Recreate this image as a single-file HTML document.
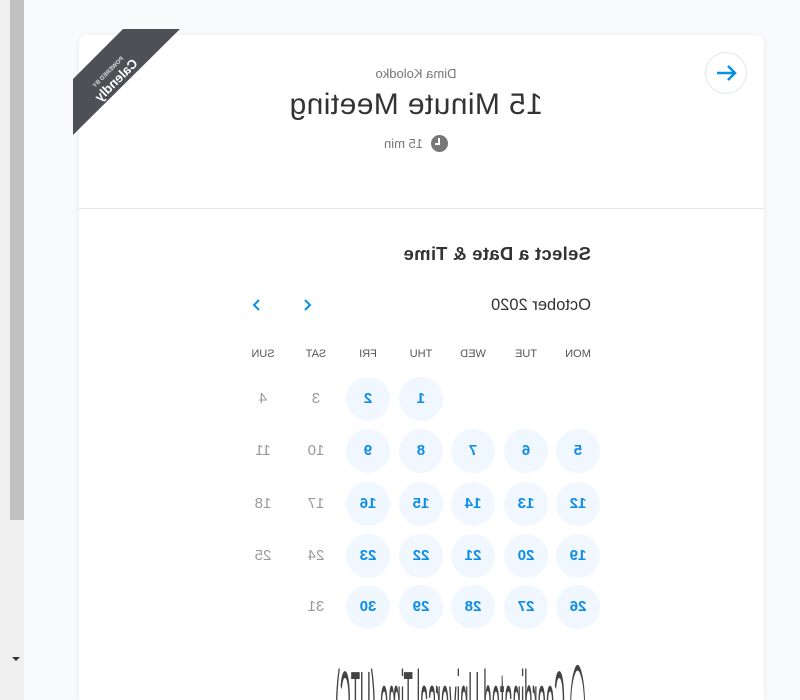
<!DOCTYPE html>
<html><head><meta charset="utf-8"><style>
html,body{margin:0;padding:0;width:800px;height:700px;overflow:hidden;background:#f9fafb;font-family:"Liberation Sans",sans-serif}
#w{position:absolute;left:0;top:0;width:800px;height:700px;overflow:hidden;transform:scaleX(-1);transform-origin:400px 350px}
.sb1{position:absolute;left:776px;top:0;width:24px;height:700px;background:#f0f0f0}
.thumb{position:absolute;left:776px;top:0;width:14px;height:520px;background:#c1c1c1}
.card{position:absolute;left:36px;top:35px;width:685px;height:665px;background:#fff;border-radius:8px 8px 0 0;box-shadow:0 1px 6px rgba(0,0,0,.08);overflow:hidden}
.div{position:absolute;left:0;top:173px;width:685px;height:1px;background:#e6e6e6}
.t{position:absolute;white-space:nowrap;transform:translateX(-50%)}
.back{position:absolute;left:17px;top:17px;width:42px;height:42px;border-radius:50%;border:1px solid #e2e6ea;box-sizing:border-box}
.rib{position:absolute;left:620px;top:29px;width:107px;height:106px;background:#4d5055;clip-path:polygon(0 0,57px 0,107px 50px,107px 106px)}
.rt{position:absolute;left:686px;top:78px;transform:translate(-50%,-50%) rotate(45deg);color:#fff;text-align:center;white-space:nowrap}
.d{position:absolute;width:44px;height:44px;border-radius:50%;margin-left:-22px;margin-top:-22px;text-align:center;line-height:44px;font-size:15px;font-weight:bold;color:#0d8de6;background:#f0f7fe}
.g{background:none;color:#999;font-weight:normal}
.h{position:absolute;font-size:11px;color:#555;transform:translateX(-50%)}
.bt{position:absolute;left:0;top:655px;width:800px;height:45px;overflow:hidden}
</style></head><body><div id="w">
<div class="sb1"></div><div class="thumb"></div>
<div style="position:absolute;left:780px;top:657px;width:0;height:0;border-left:4px solid transparent;border-right:4px solid transparent;border-top:4px solid #333"></div>
<div class="card">
 <div class="back"><svg width="40" height="40" viewBox="0 0 40 40" style="position:absolute;left:0;top:0"><path d="M29 20H11M18 13l-7 7 7 7" fill="none" stroke="#0a8fe6" stroke-width="2.5"/></svg></div>
 <div class="t" style="left:348px;top:31px;font-size:13px;color:#777">Dima Kolodko</div>
 <div class="t" style="left:348px;top:53px;font-size:30px;color:#333;letter-spacing:.4px">15 Minute Meeting</div>
 <div class="t" style="left:348px;top:100px;font-size:13px;color:#777"><span style="display:inline-block;width:17px;height:17px;border-radius:50%;background:#777;vertical-align:-4px;margin-right:8px;position:relative"><span style="position:absolute;left:8px;top:3px;width:2px;height:6px;background:#fff"></span><span style="position:absolute;left:8px;top:8px;width:5px;height:2px;background:#fff"></span></span>15 min</div>
 <div class="div"></div>
</div>
<div class="rib"></div>
<div class="rt"><div style="font-size:6px;font-weight:bold;opacity:.8">POWERED BY</div><div style="font-size:13px;font-weight:bold">Calendly</div></div>
<div style="position:absolute;left:209px;top:243px;font-size:18.5px;color:#333;font-weight:bold;letter-spacing:.3px">Select a Date &amp; Time</div>
<div style="position:absolute;left:209px;top:296px;font-size:16.5px;color:#333">October 2020</div>
<svg style="position:absolute;left:486px;top:298px" width="14" height="14"><path d="M9 2L4 7l5 5" fill="none" stroke="#0a8fe6" stroke-width="2"/></svg>
<svg style="position:absolute;left:536px;top:298px" width="14" height="14"><path d="M5 2l5 5-5 5" fill="none" stroke="#0a8fe6" stroke-width="2"/></svg>
<div class="h" style="left:222px;top:348px">MON</div><div class="h" style="left:274px;top:348px">TUE</div><div class="h" style="left:327px;top:348px">WED</div><div class="h" style="left:379px;top:348px">THU</div><div class="h" style="left:432px;top:348px">FRI</div><div class="h" style="left:484px;top:348px">SAT</div><div class="h" style="left:537px;top:348px">SUN</div>
<div class="d" style="left:379px;top:399px">1</div><div class="d" style="left:432px;top:399px">2</div><div class="d g" style="left:484px;top:399px">3</div><div class="d g" style="left:537px;top:399px">4</div>
<div class="d" style="left:222px;top:451px">5</div><div class="d" style="left:274px;top:451px">6</div><div class="d" style="left:327px;top:451px">7</div><div class="d" style="left:379px;top:451px">8</div><div class="d" style="left:432px;top:451px">9</div><div class="d g" style="left:484px;top:451px">10</div><div class="d g" style="left:537px;top:451px">11</div>
<div class="d" style="left:222px;top:504px">12</div><div class="d" style="left:274px;top:504px">13</div><div class="d" style="left:327px;top:504px">14</div><div class="d" style="left:379px;top:504px">15</div><div class="d" style="left:432px;top:504px">16</div><div class="d g" style="left:484px;top:504px">17</div><div class="d g" style="left:537px;top:504px">18</div>
<div class="d" style="left:222px;top:556px">19</div><div class="d" style="left:274px;top:556px">20</div><div class="d" style="left:327px;top:556px">21</div><div class="d" style="left:379px;top:556px">22</div><div class="d" style="left:432px;top:556px">23</div><div class="d g" style="left:484px;top:556px">24</div><div class="d g" style="left:537px;top:556px">25</div>
<div class="d" style="left:222px;top:607px">26</div><div class="d" style="left:274px;top:607px">27</div><div class="d" style="left:327px;top:607px">28</div><div class="d" style="left:379px;top:607px">29</div><div class="d" style="left:432px;top:607px">30</div><div class="d g" style="left:484px;top:607px">31</div>
<div class="bt"><div style="position:absolute;left:214px;top:-5px;font-size:15px;color:#444;transform:scaleY(6);transform-origin:0 0;white-space:nowrap">◯ Coordinated Universal Time (UTC)</div></div>
</div></body></html>
